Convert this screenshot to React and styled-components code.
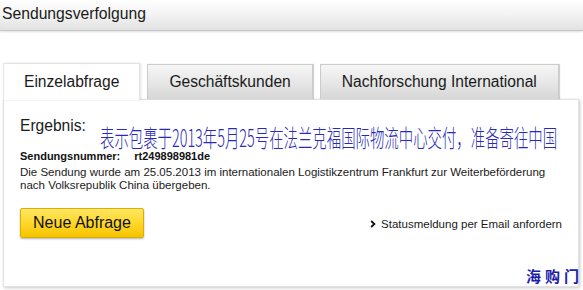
import React from "react";
import styled, { createGlobalStyle } from "styled-components";

const GlobalStyle = createGlobalStyle`
  html, body {
    margin: 0;
    padding: 0;
    background: #ffffff;
  }
  body {
    font-family: "Liberation Sans", Arial, sans-serif;
    color: #111111;
  }
`;

const Page = styled.div`
  position: relative;
  width: 583px;
  height: 290px;
  overflow: hidden;
  background: #ffffff;
`;

const Header = styled.div`
  height: 30px;
  background: linear-gradient(#ffffff 0%, #f4f4f4 45%, #e2e2e2 100%);
  border-bottom: 1px solid #c6c6c6;
  box-shadow: 0 1px 2px rgba(0, 0, 0, 0.12);
`;

const Title = styled.h1`
  margin: 0;
  padding: 5px 0 0 2px;
  font-size: 15.7px;
  line-height: 18px;
  font-weight: 400;
  color: #1a1a1a;
`;

const TabRow = styled.div`
  display: flex;
  align-items: flex-end;
  gap: 7px;
  margin-top: 32px;
  padding-left: 3px;
  position: relative;
  z-index: 2;
`;

const Tab = styled.div`
  display: flex;
  align-items: center;
  justify-content: center;
  box-sizing: border-box;
  height: ${(p) => (p.$active ? "37px" : "35px")};
  padding: 0 ${(p) => (p.$active ? "20px" : "21px")};
  font-size: 15.6px;
  color: #1a1a1a;
  border: 1px solid ${(p) => (p.$active ? "#e4e4e4" : "#cbcbcb")};
  border-bottom: none;
  background: ${(p) =>
    p.$active ? "#ffffff" : "linear-gradient(#f6f6f6 0%, #e6e6e6 55%, #d6d6d6 100%)"};
  box-shadow: ${(p) =>
    p.$active ? "1px 0 2px rgba(0, 0, 0, 0.12)" : "1px 0 1px rgba(0, 0, 0, 0.18)"};
  margin-bottom: ${(p) => (p.$active ? "-1px" : "0")};
`;

const Panel = styled.div`
  box-sizing: border-box;
  margin-left: 3px;
  width: 576px;
  height: 188px;
  padding: 17px 16px 0 16px;
  border: 1px solid #e2e2e2;
  background: #ffffff;
  box-shadow: 1px 1px 3px rgba(0, 0, 0, 0.22);
  position: relative;
  z-index: 1;
`;

const Heading = styled.div`
  font-size: 15.6px;
  line-height: 18px;
  color: #1a1a1a;
`;

const NumberLine = styled.div`
  margin-top: 15px;
  font-size: 11px;
  line-height: 13px;
  font-weight: 700;
  color: #111111;
`;

const NumberValue = styled.span`
  margin-left: 14px;
`;

const Message = styled.p`
  margin: 3px 0 0 0;
  width: 540px;
  font-size: 11.5px;
  line-height: 13px;
  color: #1a1a1a;
`;

const ActionRow = styled.div`
  display: flex;
  align-items: center;
  justify-content: space-between;
  margin-top: 16px;
`;

const YellowButton = styled.button`
  box-sizing: border-box;
  width: 124px;
  height: 30px;
  padding: 0;
  font-family: "Liberation Sans", Arial, sans-serif;
  font-size: 16px;
  color: #111111;
  border: 1px solid #dcb000;
  border-radius: 2px;
  background: linear-gradient(#ffe664 0%, #ffd82a 50%, #f6c300 100%);
  box-shadow: 0 1px 2px rgba(0, 0, 0, 0.3);
  cursor: pointer;
`;

const TextLink = styled.a`
  display: flex;
  align-items: center;
  gap: 5px;
  font-size: 11.5px;
  color: #1a1a1a;
  text-decoration: none;
  margin-top: 2px;
`;

const Annotation = styled.div`
  position: absolute;
  left: 100px;
  top: 127px;
  z-index: 5;
  font-family: "Noto Sans CJK SC", "Noto Sans CJK TC", sans-serif;
  font-size: 24px;
  line-height: 20px;
  font-weight: 300;
  color: #2a2ab8;
  white-space: nowrap;
  transform: scaleX(0.6);
  transform-origin: left top;
`;

const Watermark = styled.div`
  position: absolute;
  left: 526px;
  top: 267px;
  z-index: 5;
  font-family: "Noto Sans CJK SC", sans-serif;
  font-size: 15px;
  line-height: 17px;
  font-weight: 700;
  letter-spacing: 4px;
  color: #1c1ca8;
  white-space: nowrap;
`;

const Chevron = () => (
  <svg width="6" height="8" viewBox="0 0 6 8">
    <path d="M1.2 1 L4.4 4 L1.2 7" fill="none" stroke="#111" strokeWidth="1.8" />
  </svg>
);

const tabs = ["Einzelabfrage", "Geschäftskunden", "Nachforschung International"];

const App = () => {
  return (
    <Page>
      <GlobalStyle />
      <Header>
        <Title>Sendungsverfolgung</Title>
      </Header>
      <TabRow>
        {tabs.map((t, i) => (
          <Tab key={t} $active={i === 0}>
            {t}
          </Tab>
        ))}
      </TabRow>
      <Panel>
        <Heading>Ergebnis:</Heading>
        <NumberLine>
          Sendungsnummer:<NumberValue>rt249898981de</NumberValue>
        </NumberLine>
        <Message>
          Die Sendung wurde am 25.05.2013 im internationalen Logistikzentrum
          Frankfurt zur Weiterbeförderung nach Volksrepublik China übergeben.
        </Message>
        <ActionRow>
          <YellowButton>Neue Abfrage</YellowButton>
          <TextLink href="#">
            <Chevron />
            Statusmeldung per Email anfordern
          </TextLink>
        </ActionRow>
      </Panel>
      <Annotation>表示包裹于2013年5月25号在法兰克福国际物流中心交付，准备寄往中国</Annotation>
      <Watermark>海购门</Watermark>
    </Page>
  );
};

export default App;
